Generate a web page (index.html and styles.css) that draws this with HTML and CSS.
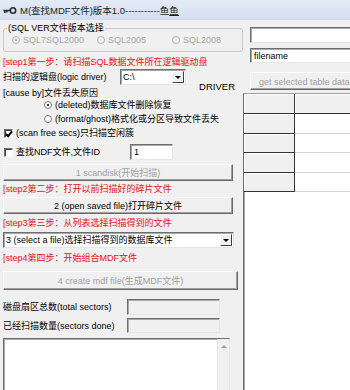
FILE: index.html
```html
<!DOCTYPE html>
<html lang="zh-CN">
<head>
  <meta charset="UTF-8" />
  <title>M(查找MDF文件)版本1.0</title>
  <link rel="stylesheet" href="styles.css">
</head>
<body>

  <div class="titlebar">
    <svg class="app-icon" viewBox="0 0 14 9" width="14" height="9">
      <path d="M0.5 4.5h6.5M1.8 4.5v2.6M3.8 4.5v2" stroke="#2b2b2b" stroke-width="1.6" fill="none"/>
      <circle cx="10" cy="4.5" r="2.7" stroke="#2b2b2b" stroke-width="1.6" fill="none"/>
    </svg>
    <span class="title">M(查找MDF文件)版本1.0-----------鱼<u>鱼</u></span>
  </div>

  <div class="client">
    <div class="left">
      <fieldset class="group">
        <legend>(SQL VER文件版本选择</legend>
        <div class="radios">
          <span class="opt disabled w85"><span class="radio on"></span>SQL7SQL2000</span>
          <span class="opt disabled w75"><span class="radio"></span>SQL2005</span>
          <span class="opt disabled"><span class="radio"></span>SQL2008</span>
        </div>
      </fieldset>

      <p class="step">[step1第一步：请扫描SQL数据文件所在逻辑驱动盘</p>

      <div class="row drive-row">
        <span class="lbl-drive">扫描的逻辑盘(logic driver)</span>
        <div class="combo sunken drive"><span class="val">C:\</span><span class="drop"></span></div>
      </div>

      <div class="row cause-row">
        <span>[cause by]文件丢失原因</span>
        <span class="driver">DRIVER</span>
      </div>

      <div class="opt indent first"><span class="radio on"></span>(deleted)数据库文件删除恢复</div>
      <div class="opt indent"><span class="radio"></span>(format/ghost)格式化或分区导致文件丢失</div>

      <div class="row chk-row">
        <span class="check on"></span>
        <span>(scan free secs)只扫描空闲簇</span>
      </div>
      <div class="row chk-row ndf-row">
        <span class="check"></span>
        <span class="lbl-ndf">查找NDF文件,文件ID</span>
        <div class="edit sunken ndf">1</div>
      </div>

      <button class="btn btn-scan" disabled>1 scandisk(开始扫描)</button>

      <p class="step s2">[step2第二步：打开以前扫描好的碎片文件</p>
      <button class="btn btn-open">2 (open saved file)打开碎片文件</button>

      <p class="step s3">[step3第三步：从列表选择扫描得到的文件</p>
      <div class="combo sunken files"><span class="val">3 (select a file)选择扫描得到的数据库文件</span><span class="drop"></span></div>

      <p class="step s4">[step4第四步：开始组合MDF文件</p>
      <button class="btn btn-create" disabled>4 create mdf file(生成MDF文件)</button>

      <div class="row stat-row first-stat">
        <span class="lbl-stat">磁盘扇区总数(total sectors)</span>
        <div class="edit sunken stat ro"></div>
      </div>
      <div class="row stat-row">
        <span class="lbl-stat">已经扫描数量(sectors done)</span>
        <div class="edit sunken stat ro short"></div>
      </div>

      <div class="memo sunken">
        <div class="vscroll"><span class="arrow-up"></span></div>
      </div>
    </div>

    <div class="right">
      <div class="edit sunken wide top-edit"></div>
      <div class="edit sunken wide name-edit">filename</div>
      <button class="btn btn-get" disabled>get selected table data(读取)</button>

      <div class="grid">
        <div class="gr head"><span class="fix"></span><span class="cell"></span><span class="cell"></span></div>
        <div class="gr"><span class="fix"></span><span class="cell"></span><span class="cell"></span></div>
        <div class="gr"><span class="fix"></span><span class="cell"></span><span class="cell"></span></div>
        <div class="gr"><span class="fix"></span><span class="cell"></span><span class="cell"></span></div>
        <div class="gr"><span class="fix"></span><span class="cell"></span><span class="cell"></span></div>
      </div>
    </div>
  </div>

</body>
</html>
```

FILE: styles.css
```css
* {
  box-sizing: border-box;
}

html,
body {
  margin: 0;
  padding: 0;
  overflow: hidden;
}

body {
  width: 350px;
  height: 390px;
  background-color: #f0f0f0;
  font-family: "Liberation Sans", "Noto Sans CJK SC", sans-serif;
  font-size: 9px;
  color: #000;
}

/* title bar */
.titlebar {
  height: 20px;
  display: flex;
  align-items: center;
  padding-left: 3px;
  background: linear-gradient(#e3ebf6, #d2ddee);
}

.app-icon {
  margin-right: 3px;
  flex: none;
}

.title {
  font-size: 9.5px;
  color: #1e1e1e;
  white-space: nowrap;
}

.client {
  display: flex;
  height: 370px;
}

/* left panel */
.left {
  width: 243px;
  flex: none;
  padding-left: 3px;
  line-height: 12px;
}

.group {
  margin: 2px 0 0;
  padding: 0 0 5px 3px;
  width: 240px;
  border: 1px solid #c8c8c8;
  border-radius: 3px;
}

.group legend {
  padding: 0 1px;
  line-height: 12px;
}

.radios {
  display: flex;
  padding-left: 5px;
  height: 12px;
}

.opt {
  display: flex;
  align-items: center;
  gap: 3px;
  white-space: nowrap;
}

.w85 { width: 85px; }
.w75 { width: 75px; }

.radio {
  width: 8px;
  height: 8px;
  flex: none;
  border-radius: 50%;
  border: 1px solid #7a7a7a;
  background-color: #fff;
  position: relative;
}

.radio.on::after {
  content: "";
  position: absolute;
  left: 2px;
  top: 2px;
  width: 2px;
  height: 2px;
  border-radius: 50%;
  background-color: #000;
}

.disabled {
  color: #a8a8a8;
}

.disabled .radio {
  border-color: #b4b4b4;
  background-color: #f0f0f0;
}

.disabled .radio.on::after {
  background-color: #a0a0a0;
}

.step {
  margin: 4px 0 0;
  color: #e31010;
  font-size: 9px;
  line-height: 12px;
  white-space: nowrap;
}

.row {
  display: flex;
  align-items: center;
  white-space: nowrap;
}

.drive-row {
  margin-top: 1px;
}

.lbl-drive {
  width: 117px;
}

.sunken {
  background-color: #fff;
  border: 1px solid;
  border-color: #6e6e6e #e6e6e6 #e6e6e6 #6e6e6e;
  box-shadow: inset 1px 1px #a8a8a8;
}

.combo {
  height: 16px;
  display: flex;
  align-items: center;
  padding: 0 1px 0 2px;
}

.drive {
  width: 66px;
}

.val {
  flex: 1;
  overflow: hidden;
}

.drop {
  width: 12px;
  height: 12px;
  flex: none;
  background-color: #f0f0f0;
  border: 1px solid;
  border-color: #fff #404040 #404040 #fff;
  display: flex;
  align-items: center;
  justify-content: center;
}

.drop::after {
  content: "";
  border-top: 3px solid #000;
  border-left: 3px solid transparent;
  border-right: 3px solid transparent;
}

.cause-row {
  margin-top: 2px;
  align-items: flex-start;
}

.driver {
  margin-left: auto;
  margin-right: 8px;
  margin-top: -6px;
  font-size: 9.5px;
}

.indent {
  padding-left: 41px;
  height: 12px;
}

.indent + .indent {
  margin-top: 2px;
}

.chk-row {
  margin-top: 2px;
  padding-left: 1px;
  gap: 3px;
  height: 12px;
}

.ndf-row {
  margin-top: 5px;
  height: 16px;
}

.check {
  width: 9px;
  height: 9px;
  flex: none;
  border: 1px solid;
  border-color: #6e6e6e #fff #fff #6e6e6e;
  box-shadow: inset 1px 1px #404040;
  background-color: #fff;
  position: relative;
}

.check.on::after {
  content: "";
  position: absolute;
  left: 2px;
  top: 0;
  width: 2px;
  height: 5px;
  border: solid #000;
  border-width: 0 2px 2px 0;
  transform: rotate(40deg);
}

.lbl-ndf {
  width: 111px;
}

.edit {
  height: 16px;
  padding: 1px 3px;
  line-height: 12px;
  white-space: nowrap;
}

.ndf {
  width: 43px;
}

.btn {
  display: flex;
  align-items: center;
  justify-content: center;
  height: 17px;
  padding: 0;
  background-color: #f0f0f0;
  border: 1px solid;
  border-color: #fff #696969 #696969 #fff;
  box-shadow: inset -1px -1px #a0a0a0;
  font: inherit;
  color: #000;
  white-space: nowrap;
}

.btn:disabled {
  color: #a0a0a0;
}

.btn-scan {
  width: 230px;
  margin-top: 4px;
}

.s2 { margin-top: 2px; }

.btn-open {
  width: 230px;
  margin-top: 2px;
}

.s3 { margin-top: 3px; }

.files {
  width: 231px;
  margin-top: 3px;
}

.s4 { margin-top: 4px; }

.btn-create {
  width: 235px;
  height: 19px;
  margin-top: 7px;
}

.stat-row {
  margin-top: 3px;
}

.first-stat {
  margin-top: 9px;
}

.lbl-stat {
  width: 124px;
}

.stat {
  width: 93px;
}

.ro {
  background-color: #f0f0f0;
}

.short {
  height: 15px;
}

.memo {
  margin-top: 5px;
  width: 227px;
  height: 60px;
  display: flex;
  justify-content: flex-end;
}

.vscroll {
  width: 12px;
  background-color: #f0f0f0;
  border-left: 1px solid #e8e8e8;
  display: flex;
  justify-content: center;
  padding-top: 6px;
}

.arrow-up {
  width: 0;
  height: 0;
  border-bottom: 3px solid #a0a0a0;
  border-left: 3px solid transparent;
  border-right: 3px solid transparent;
}

/* right panel */
.right {
  flex: 1;
  min-width: 0;
  overflow: hidden;
  display: flex;
  flex-direction: column;
}

.wide {
  width: 160px;
  flex: none;
  margin-left: 7px;
}

.top-edit {
  margin-top: 7px;
}

.name-edit {
  margin-top: 5px;
  height: 15px;
}

.btn-get {
  width: 200px;
  height: 18px;
  margin: 9px 0 0 7px;
  justify-content: flex-start;
  padding-left: 8px;
  flex: none;
}

.grid {
  flex: 1;
  margin-top: 3px;
  background-color: #fff;
  border-left: 1px solid #6b6b6b;
  border-top: 1px solid #a0a0a0;
  box-shadow: inset 1px 0 #a8a8a8;
}

.gr {
  display: flex;
  height: 19.5px;
}

.gr.head {
  height: 20px;
}

.fix {
  width: 51px;
  flex: none;
  background-color: #f0f0f0;
  border-right: 1px solid #333;
  border-bottom: 1px solid #333;
  box-shadow: inset 1px 1px #fff;
}

.cell {
  width: 64px;
  flex: none;
  background-color: #fff;
  border-right: 1px solid #d4d4d4;
  border-bottom: 1px solid #d4d4d4;
}

.head .cell {
  background-color: #f0f0f0;
  border-color: #333;
  box-shadow: inset 1px 1px #fff;
}
```
